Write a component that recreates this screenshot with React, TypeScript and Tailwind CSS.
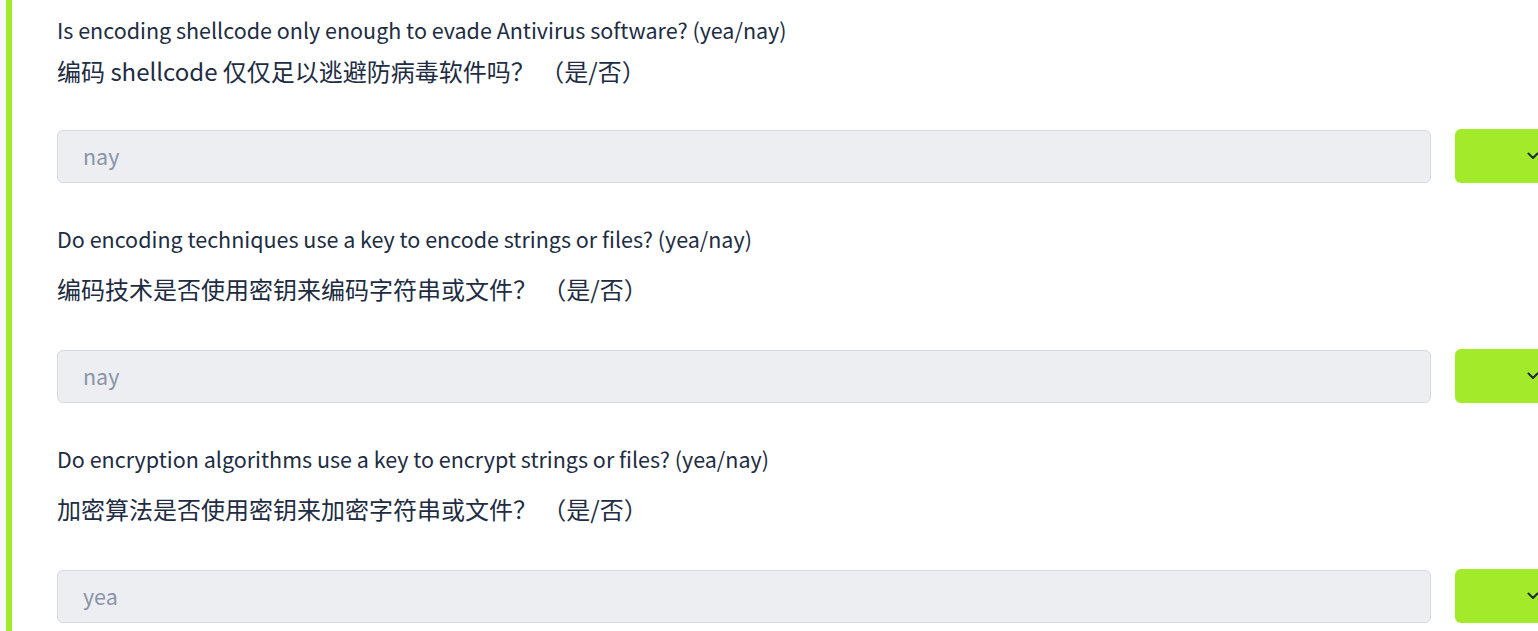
import React from "react";

interface Question {
  en: string;
  zh: string;
  answer: string;
}

const questions: Question[] = [
  {
    en: "Is encoding shellcode only enough to evade Antivirus software? (yea/nay)",
    zh: "编码 shellcode 仅仅足以逃避防病毒软件吗？ （是/否）",
    answer: "nay",
  },
  {
    en: "Do encoding techniques use a key to encode strings or files? (yea/nay)",
    zh: "编码技术是否使用密钥来编码字符串或文件？ （是/否）",
    answer: "nay",
  },
  {
    en: "Do encryption algorithms use a key to encrypt strings or files? (yea/nay)",
    zh: "加密算法是否使用密钥来加密字符串或文件？ （是/否）",
    answer: "yea",
  },
];

const Chevron = () => (
  <svg width="12" height="8" viewBox="0 0 12 8" fill="none">
    <path d="M1.5 1.5L6 6L10.5 1.5" stroke="#1f2a3c" strokeWidth="2" strokeLinecap="round" strokeLinejoin="round" />
  </svg>
);

const App = () => {
  return (
    <div
      className="flex h-[631px] w-[1538px] overflow-hidden bg-white text-[#212c42]"
      style={{ fontFamily: '"Noto Sans CJK SC", "Noto Sans", sans-serif' }}
    >
      <div className="w-[6px] shrink-0 bg-[#f7f8fa]" />
      <div className="w-[6px] shrink-0 bg-[#a3ea2a]" />
      <div className="flex flex-col pl-[45px] pt-[14px]">
        {questions.map((q, i) => (
          <div key={i} className={i === 0 ? "" : "mt-[40px]"}>
            <p className="text-[21.5px] leading-[32px] whitespace-nowrap">{q.en}</p>
            <p className={`${i === 0 ? "mt-[8px]" : "mt-[17px]"} text-[24px] leading-[34px] whitespace-nowrap`}>
              {q.zh}
            </p>
            <div className={`${i === 0 ? "mt-[41px]" : "mt-[43px]"} flex items-center`}>
              <div className="flex h-[53px] w-[1374px] shrink-0 items-center rounded-[6px] border border-[#d5d9e0] bg-[#eceef2] px-[25px] text-[21.5px] text-[#8a94a8]">
                {q.answer}
              </div>
              <div className="ml-[24px] flex h-[54px] w-[110px] shrink-0 items-center rounded-[6px] bg-[#a3ea2a] pl-[72px]">
                <Chevron />
              </div>
            </div>
          </div>
        ))}
      </div>
    </div>
  );
};

export default App;
